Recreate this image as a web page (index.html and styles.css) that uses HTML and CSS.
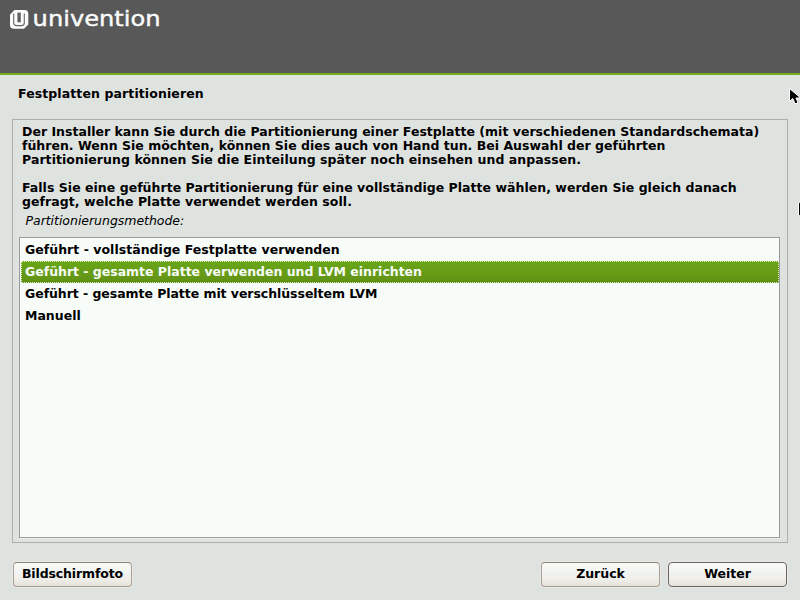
FILE: index.html
```html
<!DOCTYPE html>
<html lang="de">
<head>
<meta charset="utf-8">
<title>Festplatten partitionieren</title>
<link rel="stylesheet" href="styles.css">
</head>
<body>
<header class="banner">
  <svg class="logo" width="170" height="40" viewBox="-10 -10 170 40">
    <path d="M4.5 0H14.5Q18.3 0 18.3 4V14.5L14 18.8H4Q0 18.8 0 15V4.5Z" fill="#fafcfb"/>
    <path d="M3.7 3.4V12.7Q3.7 15.6 6.6 15.6H11.6Q14.3 15.6 14.3 12.8V3.4" fill="none" stroke="#666" stroke-width="1.1"/>
    <path d="M7.4 2.6H10.8V12.3H7.4Z" fill="#606060"/>
    <text class="wordmark" x="22.6" y="15.5" textLength="128" lengthAdjust="spacingAndGlyphs">univention</text>
  </svg>
</header>
<main class="page">
  <h1 class="title">Festplatten partitionieren</h1>
  <section class="frame">
    <p class="text"><span class="line first">Der Installer kann Sie durch die Partitionierung einer Festplatte (mit verschiedenen Standardschemata)</span><span class="line first">führen. Wenn Sie möchten, können Sie dies auch von Hand tun. Bei Auswahl der geführten</span><span class="line wide">Partitionierung können Sie die Einteilung später noch einsehen und anpassen.</span></p>
    <p class="text"><span class="line airy">Falls Sie eine geführte Partitionierung für eine vollständige Platte wählen, werden Sie gleich danach</span><span class="line wide">gefragt, welche Platte verwendet werden soll.</span></p>
    <p class="label">Partitionierungsmethode:</p>
    <ul class="list">
      <li class="row airy">Geführt - vollständige Festplatte verwenden</li>
      <li class="row selected">Geführt - gesamte Platte verwenden und LVM einrichten</li>
      <li class="row tight">Geführt - gesamte Platte mit verschlüsseltem LVM</li>
      <li class="row">Manuell</li>
    </ul>
  </section>
  <footer class="actions">
    <button class="button shot">Bildschirmfoto</button>
    <button class="button back">Zurück</button>
    <button class="button next">Weiter</button>
  </footer>
</main>
<svg class="cursor" width="11" height="17" viewBox="0 0 11 17">
  <path d="M.5 .5V13.5L3.8 10.5L6 15.5H8.5V13.5L7 10H10.5V9Z" fill="#000" stroke="#fff"/>
</svg>
<div class="edge-mark"></div>
</body>
</html>
```
FILE: styles.css
```css
* { box-sizing: border-box; }
body {
  margin: 0;
  width: 800px;
  height: 600px;
  overflow: hidden;
  display: flex;
  flex-direction: column;
  background: #dfe3e0;
  color: #000;
  font: bold 12.5px/14px "DejaVu Sans", sans-serif;
}
.banner {
  height: 75px;
  flex: none;
  background: #585858;
  border-bottom: 2px solid #75ae1c;
}
.logo { display: block; overflow: visible; }
.wordmark {
  font: 400 21px "DejaVu Sans", sans-serif;
  fill: #fafcfb;
  stroke: #fafcfb;
  stroke-width: .4px;
}
.page {
  flex: 1;
  display: flex;
  flex-direction: column;
  padding: 12px;
}
.title { margin: 0 6px 18px; font-size: 12.5px; line-height: 14px; letter-spacing: .1px; }
.frame {
  height: 424px;
  flex: none;
  display: flex;
  flex-direction: column;
  padding: 5px 7px 4px 6px;
  border: 1px solid #abafac;
}
.text { margin: 0 0 14px 3px; }
.text + .text { margin-bottom: 5px; }
.line { display: block; white-space: nowrap; }
.first { letter-spacing: .012px; }
.wide { letter-spacing: .06px; }
.airy { letter-spacing: .03px; }
.tight { letter-spacing: -.055px; }
.label { margin: 0 0 9px 6.5px; font-weight: 400; font-style: italic; letter-spacing: -.03px; }
.list {
  flex: 1;
  margin: 0;
  padding: 1px 0 0 1px;
  list-style: none;
  background: #f7fcf8;
  border: 1px solid #999c9a;
  box-shadow: 0 1px #ecefed;
}
.row { height: 22px; padding-left: 4px; line-height: 22px; white-space: nowrap; }
.selected {
  padding-left: 3px;
  line-height: 20px;
  letter-spacing: -.015px;
  color: #f7fcf8;
  background: linear-gradient(#69a618, #659716 75%, #5e8f15) border-box;
  border: 1px dotted #dcebc2;
}
.actions { display: flex; gap: 8px; margin: 19px 1px 0; }
.button {
  width: 119px;
  height: 25px;
  padding: 0 0 2px;
  font: inherit;
  color: #000;
  border: 1px solid #aa9f8e;
  border-top-color: #8b8371;
  border-radius: 4px;
  background: linear-gradient(#fbfaf7, #f0f3f1 45%, #efeee9 70%, #e5e2da);
  box-shadow: 0 0 0 1px #e8ebe9;
}
.shot { letter-spacing: -.13px; }
.back { margin-left: auto; }
.next { border-color: #6c625b; }
.cursor { position: absolute; left: 789px; top: 88px; }
.edge-mark { position: absolute; left: 798px; top: 203px; width: 2px; height: 12px; background: #000; border-left: 1px solid #fff; }
```
